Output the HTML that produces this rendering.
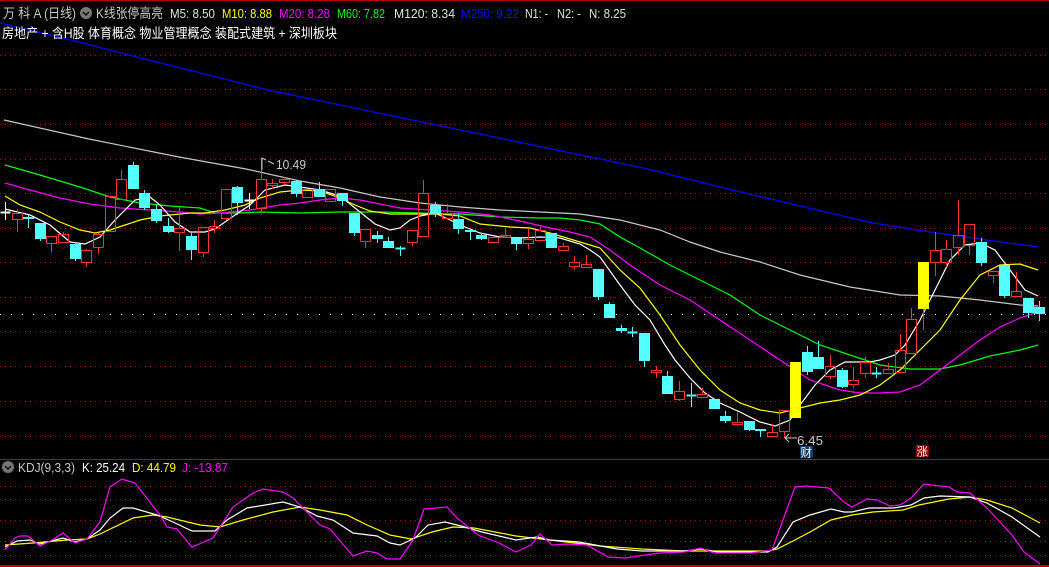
<!DOCTYPE html>
<html><head><meta charset="utf-8">
<style>
html,body{margin:0;padding:0;background:#000;width:1049px;height:567px;overflow:hidden}
svg{display:block}
text{font-family:"Liberation Sans","Noto Sans CJK SC",sans-serif}
</style></head>
<body>
<svg id="s" width="1049" height="567" viewBox="0 0 1049 567" xmlns="http://www.w3.org/2000/svg">
<rect width="1049" height="567" fill="#000"/>
<line x1="0" y1="0.5" x2="1049" y2="0.5" stroke="#b00000"/>
<g id="grid" stroke="#b00000" stroke-dasharray="1,4" shape-rendering="crispEdges"></g>
<line x1="0" y1="314.5" x2="1049" y2="314.5" stroke="#fff" stroke-dasharray="1,10"/>
<g id="lines" fill="none" stroke-width="1.2"></g>
<g id="candles" shape-rendering="crispEdges"></g>
<line x1="0" y1="459.5" x2="1049" y2="459.5" stroke="#c00000"/>
<line x1="0" y1="566" x2="1049" y2="566" stroke="#c00000" stroke-width="2"/>

<g lengthAdjust="spacingAndGlyphs">
<text x="3" y="18" font-size="13.5" fill="#c8c8c8" textLength="73" lengthAdjust="spacingAndGlyphs">万 科 A (日线)</text>
<circle cx="86" cy="13" r="6" fill="#777"/>
<path d="M83 12 L86 15 L89 12" stroke="#111" stroke-width="1.5" fill="none"/>
<text x="96" y="18" font-size="13.5" fill="#c8c8c8" textLength="67" lengthAdjust="spacingAndGlyphs">K线张停高亮</text>
<text x="170" y="18" font-size="13" fill="#e0e0e0" textLength="45" lengthAdjust="spacingAndGlyphs">M5: 8.50</text>
<text x="222" y="18" font-size="13" fill="#ffff00" textLength="50" lengthAdjust="spacingAndGlyphs">M10: 8.88</text>
<text x="279" y="18" font-size="13" fill="#ff00ff" textLength="51" lengthAdjust="spacingAndGlyphs">M20: 8.28</text>
<text x="337" y="18" font-size="13" fill="#00ff00" textLength="48" lengthAdjust="spacingAndGlyphs">M60: 7.82</text>
<text x="394" y="18" font-size="13" fill="#e0e0e0" textLength="61" lengthAdjust="spacingAndGlyphs">M120: 8.34</text>
<text x="461" y="18" font-size="13" fill="#0000ff" textLength="58" lengthAdjust="spacingAndGlyphs">M250: 9.22</text>
<text x="525" y="18" font-size="13" fill="#e0e0e0" textLength="23" lengthAdjust="spacingAndGlyphs">N1: -</text>
<text x="557" y="18" font-size="13" fill="#e0e0e0" textLength="24" lengthAdjust="spacingAndGlyphs">N2: -</text>
<text x="589" y="18" font-size="13" fill="#e0e0e0" textLength="37" lengthAdjust="spacingAndGlyphs">N: 8.25</text>
<text x="2" y="38" font-size="13.5" fill="#ffffff" textLength="335" lengthAdjust="spacingAndGlyphs">房地产 + 含H股 体育概念 物业管理概念 装配式建筑  + 深圳板块</text>
</g>

<path d="M262 170 L262 158 L266 160 M268 161 L274 164" stroke="#ccc" fill="none"/>
<text x="276" y="169" font-size="13" fill="#cccccc" textLength="30" lengthAdjust="spacingAndGlyphs">10.49</text>
<path d="M785 438 L797 438 M785 438 L789 434 M785 438 L789 442" stroke="#ccc" fill="none"/>
<text x="797" y="445" font-size="13" fill="#cccccc" textLength="26" lengthAdjust="spacingAndGlyphs">6.45</text>
<rect x="800" y="446" width="13" height="12" fill="#0d3a6a"/>
<text x="800.5" y="456.5" font-size="11.5" fill="#fff">财</text>
<rect x="916" y="445" width="13" height="12" fill="#8a0000"/>
<text x="916.5" y="455.5" font-size="11.5" fill="#fff">涨</text>

<circle cx="8" cy="467" r="6" fill="#777"/>
<path d="M5 466 L8 469 L11 466" stroke="#111" stroke-width="1.5" fill="none"/>
<text x="18" y="472" font-size="13" fill="#c8c8c8" textLength="57" lengthAdjust="spacingAndGlyphs">KDJ(9,3,3)</text>
<text x="82" y="472" font-size="13" fill="#ffffff" textLength="43" lengthAdjust="spacingAndGlyphs">K: 25.24</text>
<text x="132" y="472" font-size="13" fill="#ffff00" textLength="44" lengthAdjust="spacingAndGlyphs">D: 44.79</text>
<text x="182" y="472" font-size="13" fill="#ff00ff" textLength="46" lengthAdjust="spacingAndGlyphs">J: -13.87</text>
</svg>
<script>
var NS="http://www.w3.org/2000/svg";
function el(p,t,a){var e=document.createElementNS(NS,t);for(var k in a)e.setAttribute(k,a[k]);p.appendChild(e);return e;}
var grid=document.getElementById('grid');
[55,89,124,159,193,228,262,297,331,366,401,436,486,499,520,541,555].forEach(function(y){el(grid,'line',{x1:0,x2:1049,y1:y+0.5,y2:y+0.5});});
var lines=document.getElementById('lines');
function pl(pts,c){el(lines,'polyline',{points:pts.map(function(p){return p.join(',')}).join(' '),stroke:c});}
pl([[0,23],[71,40],[129,55],[268,90],[446,127],[643,168],[700,182],[732,190],[873,223],[937,233],[1038,247]],'#0000ff');
pl([[4,120],[89,139],[179,157],[246,169],[300,181],[340,188],[380,197],[420,203],[460,207],[500,210],[540,212],[580,214],[620,220],[660,230],[690,242],[720,252],[760,262],[800,275],[850,287],[900,295],[940,296],[980,300],[1020,305],[1038,306]],'#c8c8c8');
pl([[5,165],[40,175],[80,187],[110,197],[140,203],[170,206],[200,208],[215,213],[240,213],[260,212],[300,213],[340,212],[380,212],[420,213],[460,214],[500,217],[540,218],[560,218],[580,220],[600,224],[620,237],[640,248],[670,265],[700,280],[730,295],[760,315],[790,330],[820,345],[850,355],[880,365],[910,369],[940,369],[960,365],[990,356],[1020,350],[1038,345]],'#00ff00');
pl([[5,183],[30,190],[60,198],[90,204],[120,208],[150,210],[180,212],[200,214],[220,213],[250,210],[280,205],[300,203],[320,200],[340,198],[360,200],[380,204],[400,208],[430,210],[460,212],[490,215],[520,221],[550,228],[570,232],[590,237],[610,250],[630,265],[660,285],[690,300],[720,320],[750,340],[780,360],[810,380],[840,390],[860,393],[880,393],[900,392],[920,385],[940,370],[960,355],[980,340],[1000,327],[1020,318],[1038,312]],'#ff00ff');
pl([[5,196],[20,205],[40,212],[60,222],[80,230],[95,233],[110,230],[125,225],[140,220],[160,216],[190,213],[205,213],[225,210],[245,205],[260,198],[280,192],[300,190],[320,191],[340,198],[355,205],[370,211],[390,214],[420,214],[440,214],[460,216],[480,224],[510,227],[530,228],[550,233],[570,239],[590,245],[600,248],[620,270],[640,288],[660,315],[680,345],[700,370],[720,390],[740,403],[760,410],[780,413],[800,408],[820,403],[840,400],[860,395],[880,385],[900,370],[920,350],[940,330],[960,300],[980,275],[1000,265],[1020,264],[1038,270]],'#ffff00');
pl([[5,209],[30,215],[50,225],[70,242],[85,244],[100,237],[115,220],[135,200],[150,197],[160,205],[175,222],[190,232],[205,232],[215,229],[235,215],[250,205],[265,190],[285,185],[300,187],[320,190],[340,196],[355,208],[365,216],[375,224],[390,230],[400,228],[410,220],[420,216],[435,213],[450,220],[465,227],[480,233],[500,237],[520,238],[540,237],[560,238],[580,244],[590,250],[600,257],[620,285],[635,305],[650,320],[665,345],[675,360],[690,378],[705,393],[720,403],[740,412],[760,422],[775,426],[790,420],[800,405],[815,385],[830,370],[845,362],[870,362],[880,360],[895,355],[905,345],[920,320],[935,290],[950,260],[965,245],[980,243],[995,250],[1010,270],[1025,290],[1038,296]],'#ffffff');
pl([[5,545],[33,543],[67,540],[87,539],[100,534],[133,518],[153,515],[167,517],[200,525],[220,527],[243,520],[273,512],[300,507],[320,510],[347,515],[367,525],[390,535],[411,539],[432,532],[453,527],[474,528],[516,536],[558,541],[600,546],[642,549],[684,551],[768,551],[777,549],[793,541],[810,532],[831,520],[852,515],[873,512],[903,510],[919,505],[949,499],[970,497],[987,500],[1012,508],[1040,523]],'#ffff00');
pl([[5,547],[17,541],[30,540],[40,544],[63,538],[75,542],[87,539],[100,530],[110,518],[123,508],[133,508],[157,515],[173,522],[192,531],[215,531],[227,520],[247,508],[283,502],[300,507],[317,516],[333,520],[353,533],[377,536],[390,543],[400,545],[415,538],[428,525],[445,522],[461,526],[482,532],[516,540],[537,537],[550,540],[579,542],[617,549],[642,551],[684,551],[701,549],[718,552],[768,552],[777,547],[793,522],[810,515],[831,509],[844,512],[852,512],[869,508],[894,508],[911,505],[924,498],[940,496],[970,497],[987,503],[1012,517],[1040,537]],'#ffffff');
pl([[5,550],[15,538],[20,536],[28,536],[40,546],[52,540],[63,533],[75,543],[87,539],[100,522],[110,487],[122,479],[135,483],[160,515],[167,527],[177,529],[192,547],[213,538],[220,527],[233,507],[253,493],[263,489],[283,492],[293,498],[320,525],[330,529],[353,556],[367,551],[377,553],[387,559],[400,559],[413,540],[424,509],[447,507],[457,518],[478,535],[499,543],[516,552],[531,545],[540,534],[552,545],[566,544],[587,545],[608,557],[625,558],[659,553],[684,552],[701,548],[714,553],[751,553],[772,550],[795,487],[806,486],[829,488],[844,502],[852,507],[867,499],[877,500],[890,506],[900,505],[911,498],[924,484],[940,486],[949,487],[957,492],[970,493],[987,508],[1012,535],[1024,552],[1040,564]],'#ff00ff');
var C=[['w',212,213,202,220],['r',213,219,209,232],['c',217,219,215,228],['c',223,239,223,241],['r',236,243,236,252],['r',234,242,232,243],['c',244,259,242,261],['r',250,262,249,267],['r',234,247,233,254],['r',196,231,196,231],
['r',179,199,170,200],['c',165,189,162,189],['c',193,208,190,210],['c',209,221,205,223],['c',226,232,218,233],['r',228,232,206,251],['c',236,250,233,260],['r',227,252,227,257],['r',226,228,220,233],['r',189,218,189,220],
['c',187,203,186,215],['w',200,200,193,209],['r',179,208,158,212],['r',183,185,179,189],['r',179,182,177,185],['c',181,194,180,197],['r',189,197,189,197],['c',189,197,182,197],['r',189,201,189,201],['c',193,201,193,206],
['c',213,233,213,236],['r',229,241,229,248],['c',235,239,231,243],['c',241,248,237,248],['c',248,249,246,256],['r',230,242,230,246],['r',193,236,180,236],['c',205,214,202,217],['r',213,218,204,218],['c',219,229,213,234],
['c',230,232,230,240],['c',235,239,233,240],['r',237,242,237,243],['r',235,237,228,237],['c',237,244,237,250],['r',239,243,229,249],['r',230,240,227,241],['c',233,248,233,248],['r',246,250,243,250],['r',262,266,256,270],
['r',264,267,255,268],['c',269,297,269,300],['c',304,318,302,318],['c',328,331,325,333],['c',332,333,327,337],['c',333,361,333,367],['r',370,372,366,378],['c',376,394,371,394],['r',391,399,381,401],['c',395,396,383,407],
['r',394,397,388,397],['c',399,409,399,409],['c',416,421,411,423],['r',422,424,412,426],['c',421,430,421,431],['c',429,431,429,437],['r',432,436,424,437],['r',410,431,410,438],['y',362,418,362,418],['c',352,372,346,375],
['c',357,369,341,369],['r',366,376,355,379],['c',370,387,368,388],['r',380,384,367,388],['r',362,373,357,378],['c',373,374,367,378],['r',369,373,363,373],['r',350,372,334,372],['r',319,353,308,353],['y',262,309,262,330],
['r',250,262,232,276],['r',249,262,240,267],['r',235,247,200,255],['r',224,245,224,255],['c',242,263,238,266],['r',271,275,271,283],['c',265,296,265,298],['r',291,296,272,296],['c',298,313,298,318],['c',307,314,301,321]];
var g=document.getElementById('candles');
C.forEach(function(d,i){
 var x=Math.round(5+11.62*i)+0.5,t=d[0],top=d[1],bot=d[2],hi=d[3],lo=d[4];
 var col=t=='r'?'#ff3232':t=='c'?'#54ffff':t=='y'?'#ffff00':'#ffffff';
 var wc=t=='y'?'#ff3232':col;
 if(hi<top)el(g,'line',{x1:x,x2:x,y1:hi,y2:top,stroke:wc});
 if(lo>bot)el(g,'line',{x1:x,x2:x,y1:bot,y2:lo,stroke:wc});
 if(bot-top<=1){el(g,'line',{x1:x-5,x2:x+5,y1:top+0.5,y2:top+0.5,stroke:col,'stroke-width':2});return;}
 if(t=='r')el(g,'rect',{x:x-5,y:top+0.5,width:10,height:bot-top,fill:'none',stroke:col});
 else el(g,'rect',{x:x-5.5,y:top,width:11,height:bot-top,fill:col});
});
</script>
</body></html>
